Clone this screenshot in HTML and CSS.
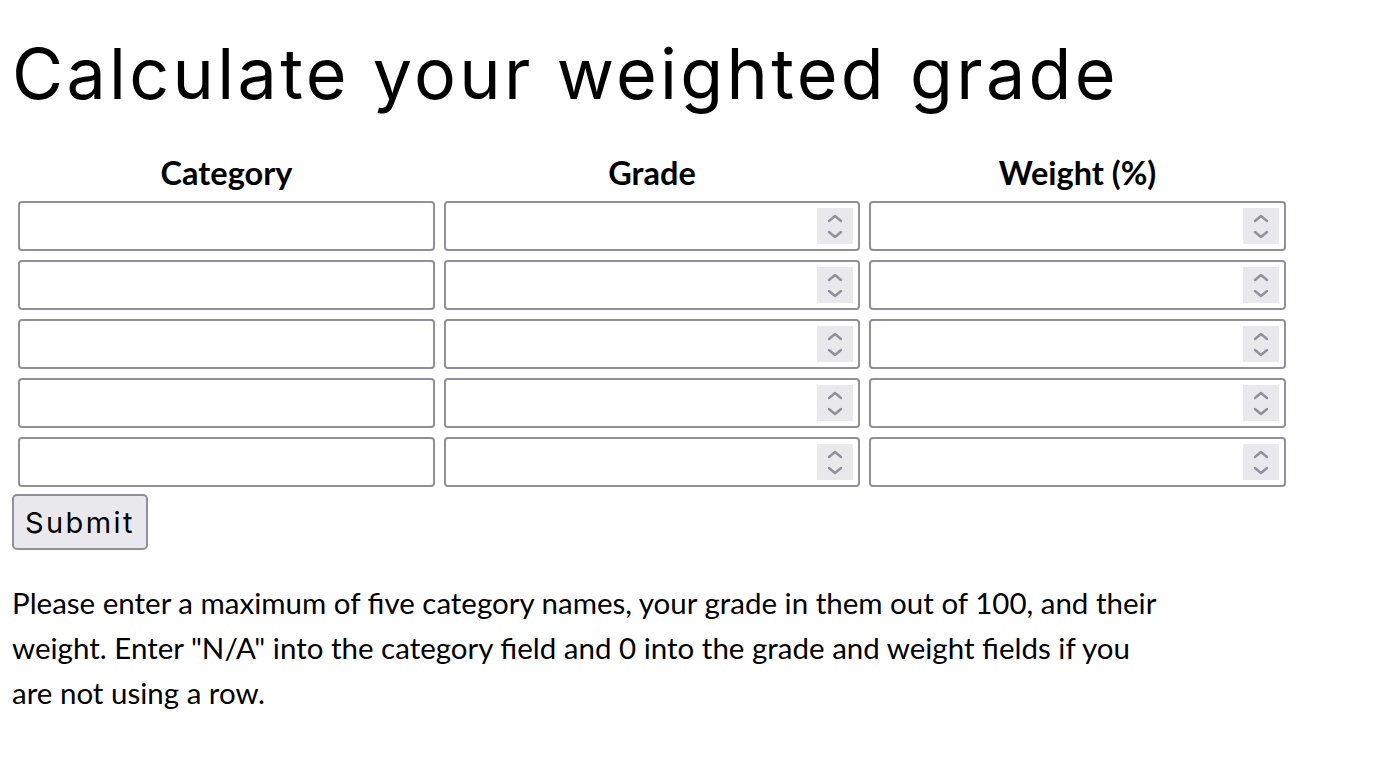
FILE: index.html
```html
<!DOCTYPE html>
<html lang="en">
<head>
<meta charset="utf-8">
<title>Weighted grade calculator</title>
<link rel="stylesheet" href="styles.css">
</head>
<body>
<h1 class="title">Calculate your weighted grade</h1>
<form class="calc">
  <div class="grid">
    <div class="head">Category</div>
    <div class="head">Grade</div>
    <div class="head">Weight (%)</div>

    <div class="field"><input class="box" type="text"></div>
    <div class="field"><input class="box" type="text"><span class="spin"><svg viewBox="0 0 36 36" width="36" height="36"><path d="M12 13 L18 8 L24 13" /><path d="M12 24 L18 29 L24 24" /></svg></span></div>
    <div class="field"><input class="box" type="text"><span class="spin"><svg viewBox="0 0 36 36" width="36" height="36"><path d="M12 13 L18 8 L24 13" /><path d="M12 24 L18 29 L24 24" /></svg></span></div>

    <div class="field"><input class="box" type="text"></div>
    <div class="field"><input class="box" type="text"><span class="spin"><svg viewBox="0 0 36 36" width="36" height="36"><path d="M12 13 L18 8 L24 13" /><path d="M12 24 L18 29 L24 24" /></svg></span></div>
    <div class="field"><input class="box" type="text"><span class="spin"><svg viewBox="0 0 36 36" width="36" height="36"><path d="M12 13 L18 8 L24 13" /><path d="M12 24 L18 29 L24 24" /></svg></span></div>

    <div class="field"><input class="box" type="text"></div>
    <div class="field"><input class="box" type="text"><span class="spin"><svg viewBox="0 0 36 36" width="36" height="36"><path d="M12 13 L18 8 L24 13" /><path d="M12 24 L18 29 L24 24" /></svg></span></div>
    <div class="field"><input class="box" type="text"><span class="spin"><svg viewBox="0 0 36 36" width="36" height="36"><path d="M12 13 L18 8 L24 13" /><path d="M12 24 L18 29 L24 24" /></svg></span></div>

    <div class="field"><input class="box" type="text"></div>
    <div class="field"><input class="box" type="text"><span class="spin"><svg viewBox="0 0 36 36" width="36" height="36"><path d="M12 13 L18 8 L24 13" /><path d="M12 24 L18 29 L24 24" /></svg></span></div>
    <div class="field"><input class="box" type="text"><span class="spin"><svg viewBox="0 0 36 36" width="36" height="36"><path d="M12 13 L18 8 L24 13" /><path d="M12 24 L18 29 L24 24" /></svg></span></div>

    <div class="field"><input class="box" type="text"></div>
    <div class="field"><input class="box" type="text"><span class="spin"><svg viewBox="0 0 36 36" width="36" height="36"><path d="M12 13 L18 8 L24 13" /><path d="M12 24 L18 29 L24 24" /></svg></span></div>
    <div class="field"><input class="box" type="text"><span class="spin"><svg viewBox="0 0 36 36" width="36" height="36"><path d="M12 13 L18 8 L24 13" /><path d="M12 24 L18 29 L24 24" /></svg></span></div>
  </div>
  <button class="submit" type="button">Submit</button>
</form>
<p class="note">Please enter a maximum of five category names, your grade in them out of 100, and their weight. Enter "N/A" into the category field and 0 into the grade and weight fields if you are not using a row.</p>
</body>
</html>
```
FILE: styles.css
```css
html, body {
  margin: 0;
  padding: 0;
  background: #ffffff;
  color: #000000;
}
body {
  padding: 0 12px;
  font-family: "Lato", "Liberation Sans", sans-serif;
}
.title {
  margin: 0;
  padding-top: 34px;
  font-family: "Inter", "DejaVu Sans", sans-serif;
  font-weight: 400;
  font-size: 70px;
  line-height: 80px;
  letter-spacing: 3.3px;
}
.calc {
  margin-top: 40px;
}
.grid {
  display: grid;
  grid-template-columns: 417px 416px 417px;
  column-gap: 9px;
  row-gap: 9px;
  margin-left: 6px;
}
.head {
  text-align: center;
  font-weight: 700;
  font-size: 32.5px;
  line-height: 38px;
  margin-bottom: 0;
}
.field {
  display: flex;
  align-items: center;
  height: 50px;
  box-sizing: border-box;
  border: 2px solid #8f8f9d;
  border-radius: 4px;
  background: #fff;
  padding-right: 5px;
}
.box {
  flex: 1;
  min-width: 0;
  height: 100%;
  border: 0;
  outline: none;
  background: transparent;
  padding: 0 8px;
  font: inherit;
}
.spin {
  display: flex;
  width: 36px;
  height: 36px;
  background: #e9e9ed;
}
.spin svg path {
  fill: none;
  stroke: #8f8f9d;
  stroke-width: 2.4;
  stroke-linecap: round;
  stroke-linejoin: round;
}
.submit {
  display: block;
  margin-top: 7px;
  height: 56px;
  padding: 0 11px;
  border: 2px solid #8f8f9d;
  border-radius: 5px;
  background: #e9e9ed;
  font-family: "Inter", "DejaVu Sans", sans-serif;
  font-size: 29px;
  letter-spacing: 2.4px;
  color: #000;
}
.note {
  margin: 30px 0 0;
  max-width: 1160px;
  font-size: 29.5px;
  line-height: 45px;
}
```
